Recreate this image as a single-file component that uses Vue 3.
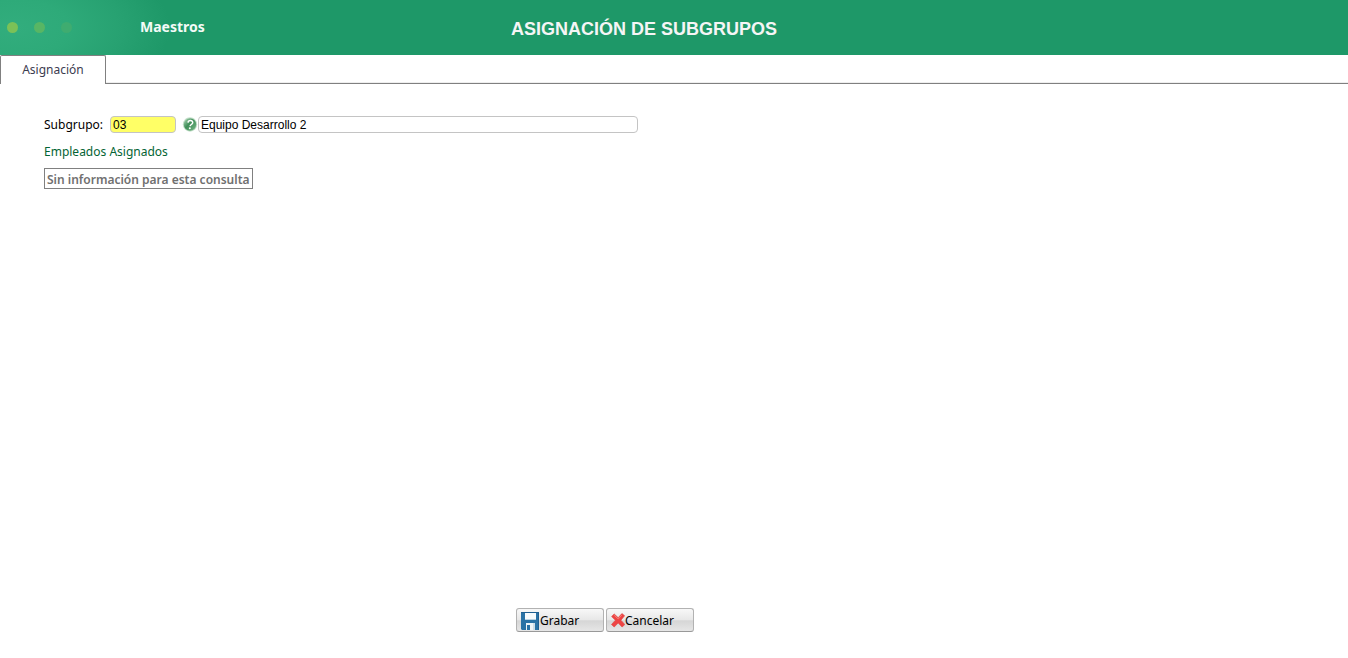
<script setup>
import { ref } from 'vue'

const code = ref('03')
const name = ref('Equipo Desarrollo 2')
</script>

<template>
  <div class="page">
    <header class="banner">
      <div class="brand">
        <span class="dots"><i class="dot one"></i><i class="dot two"></i><i class="dot three"></i></span>
        <span class="module">Maestros</span>
      </div>
      <h1 class="title">ASIGNACIÓN DE SUBGRUPOS</h1>
    </header>

    <nav class="tabs">
      <a class="tab" href="#asignacion">Asignación</a>
    </nav>

    <main id="asignacion" class="content">
      <div class="row">
        <label class="label" for="code">Subgrupo:</label>
        <input id="code" v-model="code" class="field code" type="text" />
        <button class="help" type="button" aria-label="Buscar subgrupo">
          <svg viewBox="0 0 16 16" width="16" height="16">
            <defs>
              <linearGradient id="ball" x1="0" y1="0" x2="1" y2="1">
                <stop offset="0" stop-color="#b5dcbd" />
                <stop offset="0.45" stop-color="#408e59" />
                <stop offset="1" stop-color="#79b888" />
              </linearGradient>
            </defs>
            <circle cx="8" cy="7.500" r="7.200" fill="#c5e0cb" />
            <circle cx="8" cy="7.500" r="6.200" fill="url(#ball)" />
            <path d="M6 5.700C6.200 4.200 7.200 3.600 8.400 3.600c1.500 0 2.400.8 2.300 2-.1 1.800-2.300 1.900-2.600 3.500" fill="none" stroke="#fff" stroke-width="1.500" />
            <circle cx="7.800" cy="11.200" r="1" fill="#fff" />
          </svg>
        </button>
        <input v-model="name" class="field name" type="text" aria-label="Nombre del subgrupo" />
      </div>
      <h2 class="subtitle">Empleados Asignados</h2>
      <p class="empty">Sin información para esta consulta</p>
    </main>

    <footer class="actions">
      <button class="action" type="button">
        <svg class="disk" viewBox="0 0 18 18" width="18" height="18">
          <path d="M0 0h18v18H1l-1-1z" fill="#2a72a5" />
          <path d="M0 0h18v1H0zM17 1h1v17h-1z" fill="#1f5f91" />
          <path d="M4 1h11v7H4z" fill="#f7fbfd" />
          <path d="M4 7h11v1H4z" fill="#b9d2e2" />
          <path d="M5 11h9v7H5z" fill="#eef4f7" />
          <path d="M6 13h3v5H6z" fill="#2a72a5" />
          <path d="M12 11h2v7h-2z" fill="#cddde7" />
        </svg>
        <span>Grabar</span>
      </button>
      <button class="action" type="button">
        <svg class="cross" viewBox="0 0 14 16" width="14" height="16">
          <path d="M3.200 1 7.200 4.700 10.900.6l2.700 2.100-3.700 4.500 3.900 4.300-2.700 2.500-3.900-4.100-4 4.100L.5 11.500l3.900-4.300L.6 3.500z" fill="#ee4444" stroke="#e04a48" stroke-width=".7" stroke-linejoin="round" />
          <path d="M3.200 2.300 7.200 6 10.900 2" fill="none" stroke="#f77a70" stroke-width="1" />
        </svg>
        <span>Cancelar</span>
      </button>
    </footer>
  </div>
</template>

<style>
body {
  margin: 0;
  background: #fff;
}
</style>

<style scoped>
.page {
  display: flex;
  flex-direction: column;
  min-height: 100vh;
  font-family: "Noto Sans", "Open Sans", sans-serif;
  font-size: 12px;
  line-height: 16px;
  color: #000;
}
.banner {
  display: grid;
  grid-template-columns: 1fr auto 1fr;
  align-items: center;
  height: 55px;
  padding-right: 60px;
  background: radial-gradient(ellipse 155px 80px at 15px 28px, #32ad7d 0, #2eaa79 35%, #27a171 70%, #1e9868 100%) #1e9868;
}
.brand {
  display: flex;
  align-items: center;
}
.dots {
  display: flex;
  gap: 16px;
  width: 133px;
  padding-left: 7px;
}
.dot {
  width: 11px;
  height: 11px;
  border-radius: 50%;
}
.one { background: #7bc157; }
.two { background: #58b664; }
.three { background: #3fac70; }
.module {
  padding-bottom: 2px;
  font-size: 14px;
  font-weight: 700;
  color: #f4fbf7;
}
.title {
  margin: 0;
  padding-top: 2px;
  font: 700 18px/20px "Liberation Sans", Arial, sans-serif;
  color: #f5f5f5;
}
.tabs {
  display: flex;
  height: 28px;
  border-bottom: 1px solid #808080;
  box-shadow: inset 0 -1px #eee;
}
.tab {
  box-sizing: border-box;
  width: 106px;
  height: 29px;
  padding-top: 6px;
  border: 1px solid #808080;
  border-bottom: 0;
  border-radius: 2px 2px 0 0;
  background: #fff;
  color: #3c3c50;
  text-align: center;
  text-decoration: none;
}
.content {
  flex: 1;
  padding: 32px 44px 0;
}
.row {
  display: flex;
  align-items: center;
  height: 17px;
}
.label {
  width: 66px;
}
.field {
  box-sizing: border-box;
  height: 17px;
  padding: 0 2px;
  border: 1px solid #c4c4c4;
  border-radius: 4px;
  background: #fff;
  color: #000;
  font: 12px "Liberation Sans", Arial, sans-serif;
}
.code {
  width: 66px;
  background: #ff6;
}
.name {
  width: 440px;
}
.help {
  display: flex;
  margin-left: 6px;
  padding: 0;
  border: 0;
  background: none;
}
.subtitle {
  margin: 11px 0 8px;
  font-size: 12px;
  font-weight: 400;
  line-height: 16px;
  color: #046434;
}
.empty {
  width: fit-content;
  margin: 0;
  padding: 3px 2px 1px;
  border: 1px solid #808080;
  font-size: 12px;
  font-weight: 600;
  line-height: 15px;
  color: #707070;
}
.actions {
  display: flex;
  justify-content: center;
  gap: 2px;
  padding: 0 138px 26px 0;
}
.action {
  display: flex;
  align-items: center;
  box-sizing: border-box;
  width: 88px;
  height: 24px;
  padding: 1px 4px 0;
  border: 1px solid #b2b2b2;
  border-bottom-color: #999;
  border-radius: 3px;
  background: linear-gradient(#f8f8f8, #e8e8e8 48%, #d6d6d6 54%, #e6e6e6);
  color: #000;
  font: 12px/17px "Noto Sans", "Open Sans", sans-serif;
}
.disk {
  margin-right: 1px;
}
</style>
